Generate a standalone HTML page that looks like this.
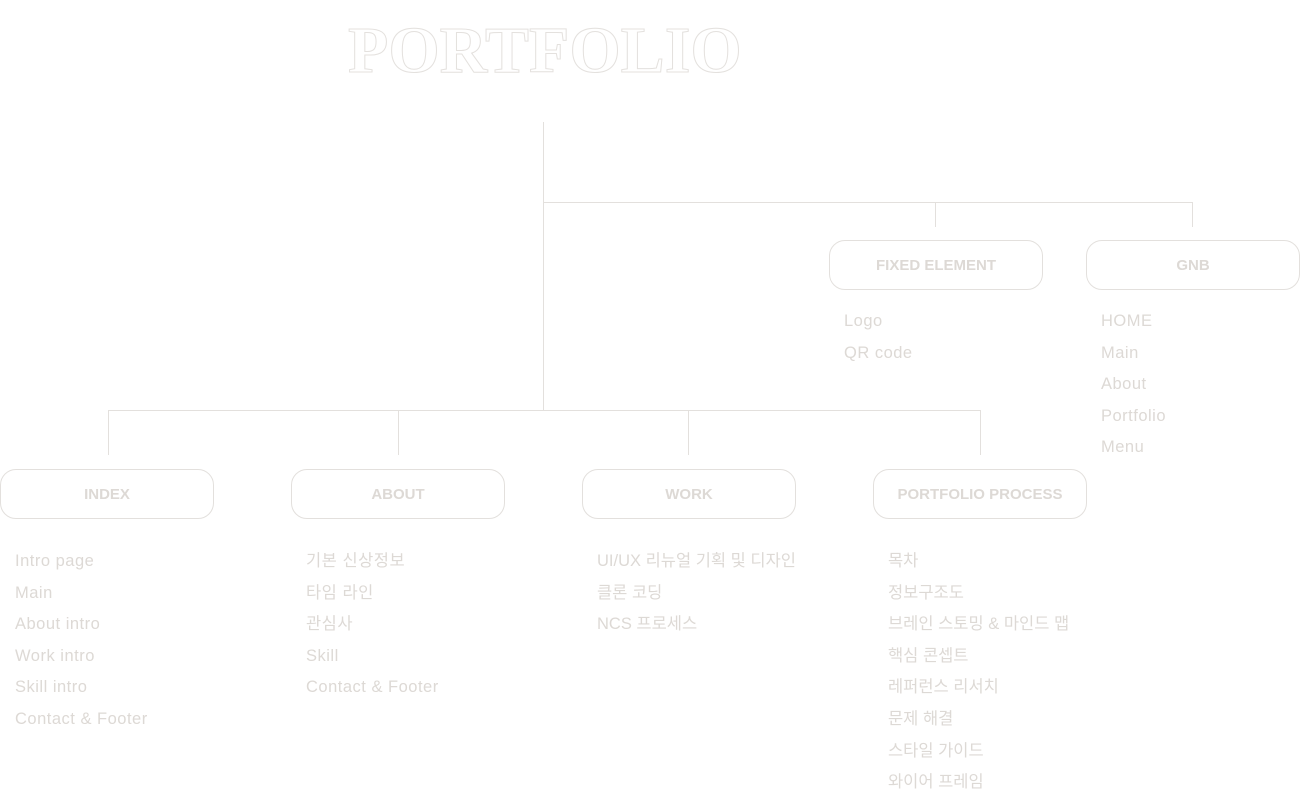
<!DOCTYPE html>
<html><head><meta charset="utf-8"><style>
body{margin:0;width:1300px;height:796px;background:#fff;position:relative;overflow:hidden;font-family:"Liberation Sans","Noto Sans CJK KR",sans-serif;}
.t{position:absolute;left:348px;top:11px;font-family:"Liberation Serif",serif;font-weight:bold;font-size:66px;color:transparent;-webkit-text-stroke:1px #e4e1de;line-height:80px;white-space:nowrap}
.l{position:absolute;background:#e3e0dd}
.b{position:absolute;width:212px;height:48px;border:1px solid #e3e0dd;border-radius:16px;text-align:center;line-height:50px;font-weight:bold;font-size:15px;color:#ddd9d5}
.u{position:absolute;margin:0;padding:0;list-style:none;font-size:16.5px;color:#ddd9d5;letter-spacing:0.5px}
.u li{height:31.6px;line-height:31.6px}
</style></head><body>
<div class="t">PORTFOLIO</div>
<div class="l" style="left:543px;top:122px;width:1px;height:289px"></div>
<div class="l" style="left:543px;top:202px;width:650px;height:1px"></div>
<div class="l" style="left:935px;top:202px;width:1px;height:25px"></div>
<div class="l" style="left:1192px;top:202px;width:1px;height:25px"></div>
<div class="l" style="left:108px;top:410px;width:873px;height:1px"></div>
<div class="l" style="left:108px;top:410px;width:1px;height:45px"></div>
<div class="l" style="left:398px;top:410px;width:1px;height:45px"></div>
<div class="l" style="left:688px;top:410px;width:1px;height:45px"></div>
<div class="l" style="left:980px;top:410px;width:1px;height:45px"></div>
<div class="b" style="left:829px;top:240px">FIXED ELEMENT</div>
<div class="b" style="left:1086px;top:240px">GNB</div>
<div class="b" style="left:0;top:469px">INDEX</div>
<div class="b" style="left:291px;top:469px">ABOUT</div>
<div class="b" style="left:582px;top:469px">WORK</div>
<div class="b" style="left:873px;top:469px">PORTFOLIO PROCESS</div>
<ul class="u" style="left:844px;top:306px"><li>Logo</li><li>QR code</li></ul>
<ul class="u" style="left:1101px;top:306px"><li>HOME</li><li>Main</li><li>About</li><li>Portfolio</li><li>Menu</li></ul>
<ul class="u" style="left:15px;top:546px"><li>Intro page</li><li>Main</li><li>About intro</li><li>Work intro</li><li>Skill intro</li><li>Contact &amp; Footer</li></ul>
<ul class="u" style="left:306px;top:546px"><li>기본 신상정보</li><li>타임 라인</li><li>관심사</li><li>Skill</li><li>Contact &amp; Footer</li></ul>
<ul class="u" style="left:597px;top:546px;letter-spacing:0"><li>UI/UX 리뉴얼 기획 및 디자인</li><li>클론 코딩</li><li>NCS 프로세스</li></ul>
<ul class="u" style="left:888px;top:546px;letter-spacing:0"><li>목차</li><li>정보구조도</li><li>브레인 스토밍 &amp; 마인드 맵</li><li>핵심 콘셉트</li><li>레퍼런스 리서치</li><li>문제 해결</li><li>스타일 가이드</li><li>와이어 프레임</li></ul>
</body></html>
